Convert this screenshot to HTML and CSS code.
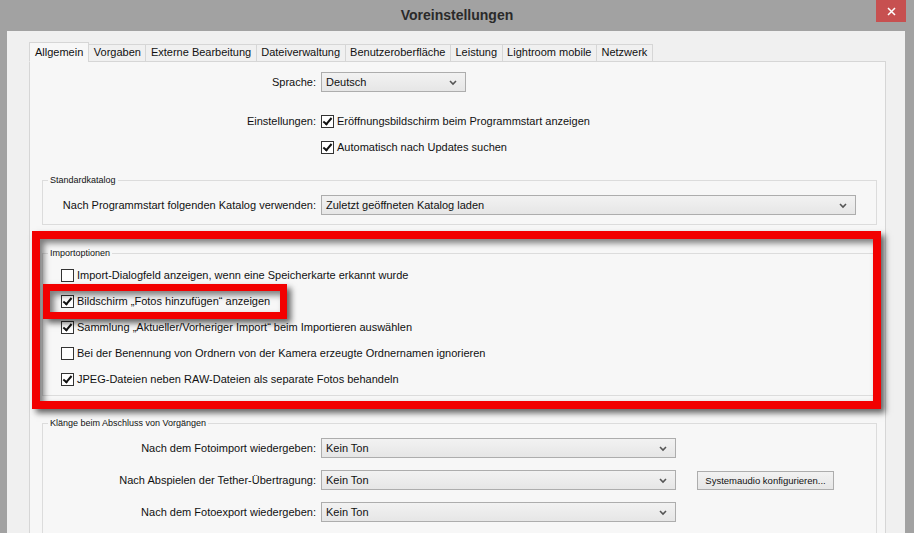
FILE: index.html
```html
<!DOCTYPE html>
<html lang="de">
<head>
    <meta charset="UTF-8">
    <title>Voreinstellungen</title>
    <link rel="stylesheet" href="styles.css">
</head>
<body>
    <div class="window">
        <div class="titlebar">
            <span></span>
            <span class="title">Voreinstellungen</span>
            <span class="close">
                <svg width="9" height="9" viewBox="0 0 9 9"><path d="M1 1 L8 8 M8 1 L1 8" stroke="#fff" stroke-width="1.5" fill="none"/></svg>
            </span>
        </div>

        <div class="dialog">
            <div class="tabs">
                <div class="tab active">Allgemein</div>
                <div class="tab">Vorgaben</div>
                <div class="tab">Externe Bearbeitung</div>
                <div class="tab">Dateiverwaltung</div>
                <div class="tab">Benutzeroberfläche</div>
                <div class="tab">Leistung</div>
                <div class="tab">Lightroom mobile</div>
                <div class="tab">Netzwerk</div>
            </div>

            <div class="panel">
                <div class="row row-lang">
                    <span class="lbl">Sprache:</span>
                    <div class="select sel-lang">Deutsch
                        <svg class="chev" width="8" height="6" viewBox="0 0 8 6"><path d="M1 1 L4 4 L7 1" stroke="#555" stroke-width="1.6" fill="none"/></svg>
                    </div>
                </div>
                <div class="row row-first">
                    <span class="lbl">Einstellungen:</span>
                    <label class="check"><span class="box on"></span>Eröffnungsbildschirm beim Programmstart anzeigen</label>
                </div>
                <div class="row row-next">
                    <span class="lbl"></span>
                    <label class="check"><span class="box on"></span>Automatisch nach Updates suchen</label>
                </div>

                <fieldset class="group g-catalog">
                    <legend>Standardkatalog</legend>
                    <div class="row">
                        <span class="lbl">Nach Programmstart folgenden Katalog verwenden:</span>
                        <div class="select sel-catalog">Zuletzt geöffneten Katalog laden
                            <svg class="chev" width="8" height="6" viewBox="0 0 8 6"><path d="M1 1 L4 4 L7 1" stroke="#555" stroke-width="1.6" fill="none"/></svg>
                        </div>
                    </div>
                </fieldset>

                <fieldset class="group g-import">
                    <legend>Importoptionen</legend>
                    <label class="check"><span class="box"></span>Import-Dialogfeld anzeigen, wenn eine Speicherkarte erkannt wurde</label>
                    <label class="check"><span class="box on"></span>Bildschirm „Fotos hinzufügen“ anzeigen</label>
                    <label class="check"><span class="box on"></span>Sammlung „Aktueller/Vorheriger Import“ beim Importieren auswählen</label>
                    <label class="check"><span class="box"></span>Bei der Benennung von Ordnern von der Kamera erzeugte Ordnernamen ignorieren</label>
                    <label class="check"><span class="box on"></span>JPEG-Dateien neben RAW-Dateien als separate Fotos behandeln</label>
                </fieldset>

                <fieldset class="group g-sound">
                    <legend>Klänge beim Abschluss von Vorgängen</legend>
                    <div class="row">
                        <span class="lbl">Nach dem Fotoimport wiedergeben:</span>
                        <div class="select sel-sound">Kein Ton
                            <svg class="chev" width="8" height="6" viewBox="0 0 8 6"><path d="M1 1 L4 4 L7 1" stroke="#555" stroke-width="1.6" fill="none"/></svg>
                        </div>
                    </div>
                    <div class="row">
                        <span class="lbl">Nach Abspielen der Tether-Übertragung:</span>
                        <div class="select sel-sound">Kein Ton
                            <svg class="chev" width="8" height="6" viewBox="0 0 8 6"><path d="M1 1 L4 4 L7 1" stroke="#555" stroke-width="1.6" fill="none"/></svg>
                        </div>
                        <button class="btn">Systemaudio konfigurieren...</button>
                    </div>
                    <div class="row">
                        <span class="lbl">Nach dem Fotoexport wiedergeben:</span>
                        <div class="select sel-sound">Kein Ton
                            <svg class="chev" width="8" height="6" viewBox="0 0 8 6"><path d="M1 1 L4 4 L7 1" stroke="#555" stroke-width="1.6" fill="none"/></svg>
                        </div>
                    </div>
                </fieldset>

                <!-- red annotation frames drawn over the dialog -->
                <div class="mark mark-big"></div>
                <div class="mark mark-small"></div>
            </div>
        </div>
    </div>
</body>
</html>
```

FILE: styles.css
```css
body {
    margin: 0;
    font-family: "Liberation Sans", Arial, sans-serif;
    font-size: 11px;
    color: #111;
}
.window {
    width: 914px;
    height: 533px;
    overflow: hidden;
    background-color: #a2a2a2;
    display: flex;
    flex-direction: column;
}
.titlebar {
    height: 31px;
    flex-shrink: 0;
    display: grid;
    grid-template-columns: 1fr auto 1fr;
    align-items: center;
}
.title {
    font-size: 14px;
    font-weight: bold;
    color: #2a2a2a;
    margin-top: -1px;
}
.close {
    justify-self: end;
    align-self: start;
    width: 30px;
    height: 22px;
    margin-right: 8px;
    background-color: #c75050;
    display: flex;
    align-items: center;
    justify-content: center;
}
.dialog {
    flex: 1;
    margin: 0 9px 0 7px;
    padding: 11px 19px 0 22px;
    background-color: #f0f0f0;
}

/* tabs */
.tabs {
    display: flex;
    align-items: flex-end;
    position: relative;
    z-index: 1;
    margin-bottom: -1px;
}
.tab {
    height: 16px;
    line-height: 15px;
    padding: 0 4.5px;
    border: 1px solid #d6d6d6;
    background-color: #f0f0f0;
    margin-left: -1px;
}
.tab:first-child {
    margin-left: 0;
    padding: 0 5px;
}
.tab.active {
    height: 18px;
    line-height: 19px;
    background-color: #f7f7f7;
    border-bottom-color: #f7f7f7;
}
.panel {
    position: relative;
    border: 1px solid #d6d6d6;
    background-color: #f7f7f7;
    height: 480px;
}

/* form rows */
.row {
    display: flex;
    align-items: center;
    height: 20px;
}
.lbl {
    width: 286px;
    margin-right: 5px;
    text-align: right;
    flex-shrink: 0;
}
.row-lang {
    margin-top: 10px;
}
.row-first {
    margin-top: 19px;
}
.row-next {
    margin-top: 6px;
}
.select {
    position: relative;
    box-sizing: border-box;
    height: 20px;
    line-height: 18px;
    padding-left: 4px;
    border: 1px solid #adadad;
    background: linear-gradient(#f2f2f2, #e6e6e6);
}
.chev {
    position: absolute;
    right: 8px;
    top: 7px;
}
.sel-lang {
    width: 145px;
}
.sel-catalog {
    width: 535px;
}
.sel-sound {
    width: 355px;
}
.check {
    display: flex;
    align-items: center;
    height: 20px;
}
.box {
    box-sizing: border-box;
    width: 13px;
    height: 13px;
    margin-right: 3px;
    border: 1px solid #333;
    background-color: #fff;
    position: relative;
}
.box.on::after {
    content: "";
    position: absolute;
    left: 3px;
    top: 0px;
    width: 3px;
    height: 7px;
    border: solid #111;
    border-width: 0 2px 2px 0;
    transform: rotate(40deg);
}
.btn {
    margin-left: 21px;
    width: 137px;
    height: 19px;
    padding: 0;
    font-family: inherit;
    font-size: 9.5px;
    color: #111;
    border: 1px solid #adadad;
    background: linear-gradient(#f2f2f2, #e6e6e6);
}

/* group boxes */
.group {
    margin: 0 8px 0 12px;
    border: 1px solid #dcdcdc;
    padding: 0;
    min-width: 0;
}
.group legend {
    font-size: 9px;
    line-height: 11px;
    padding: 0 2px;
    margin-left: 5px;
}
.group .lbl {
    width: 273px;
}
.g-catalog {
    margin-top: 18px;
    padding: 9px 0 9px;
}
.g-import {
    margin-top: 23px;
    padding: 6px 0 6px;
    display: flex;
    flex-direction: column;
    gap: 6px;
}
.g-import .check {
    margin-left: 18px;
}
.g-sound {
    margin-top: 22px;
    padding: 9px 0 20px;
    display: flex;
    flex-direction: column;
    gap: 12px;
}

/* annotation */
.mark {
    position: absolute;
    box-sizing: border-box;
    border: 8px solid #f20000;
    box-shadow: 4px 4px 6px rgba(0,0,0,0.6), inset 4px 4px 6px rgba(0,0,0,0.5);
}
.mark-big {
    left: 2px;
    top: 169px;
    width: 849px;
    height: 178px;
}
.mark-small {
    left: 13px;
    top: 222px;
    width: 244px;
    height: 35px;
    border-width: 7px;
}
```
